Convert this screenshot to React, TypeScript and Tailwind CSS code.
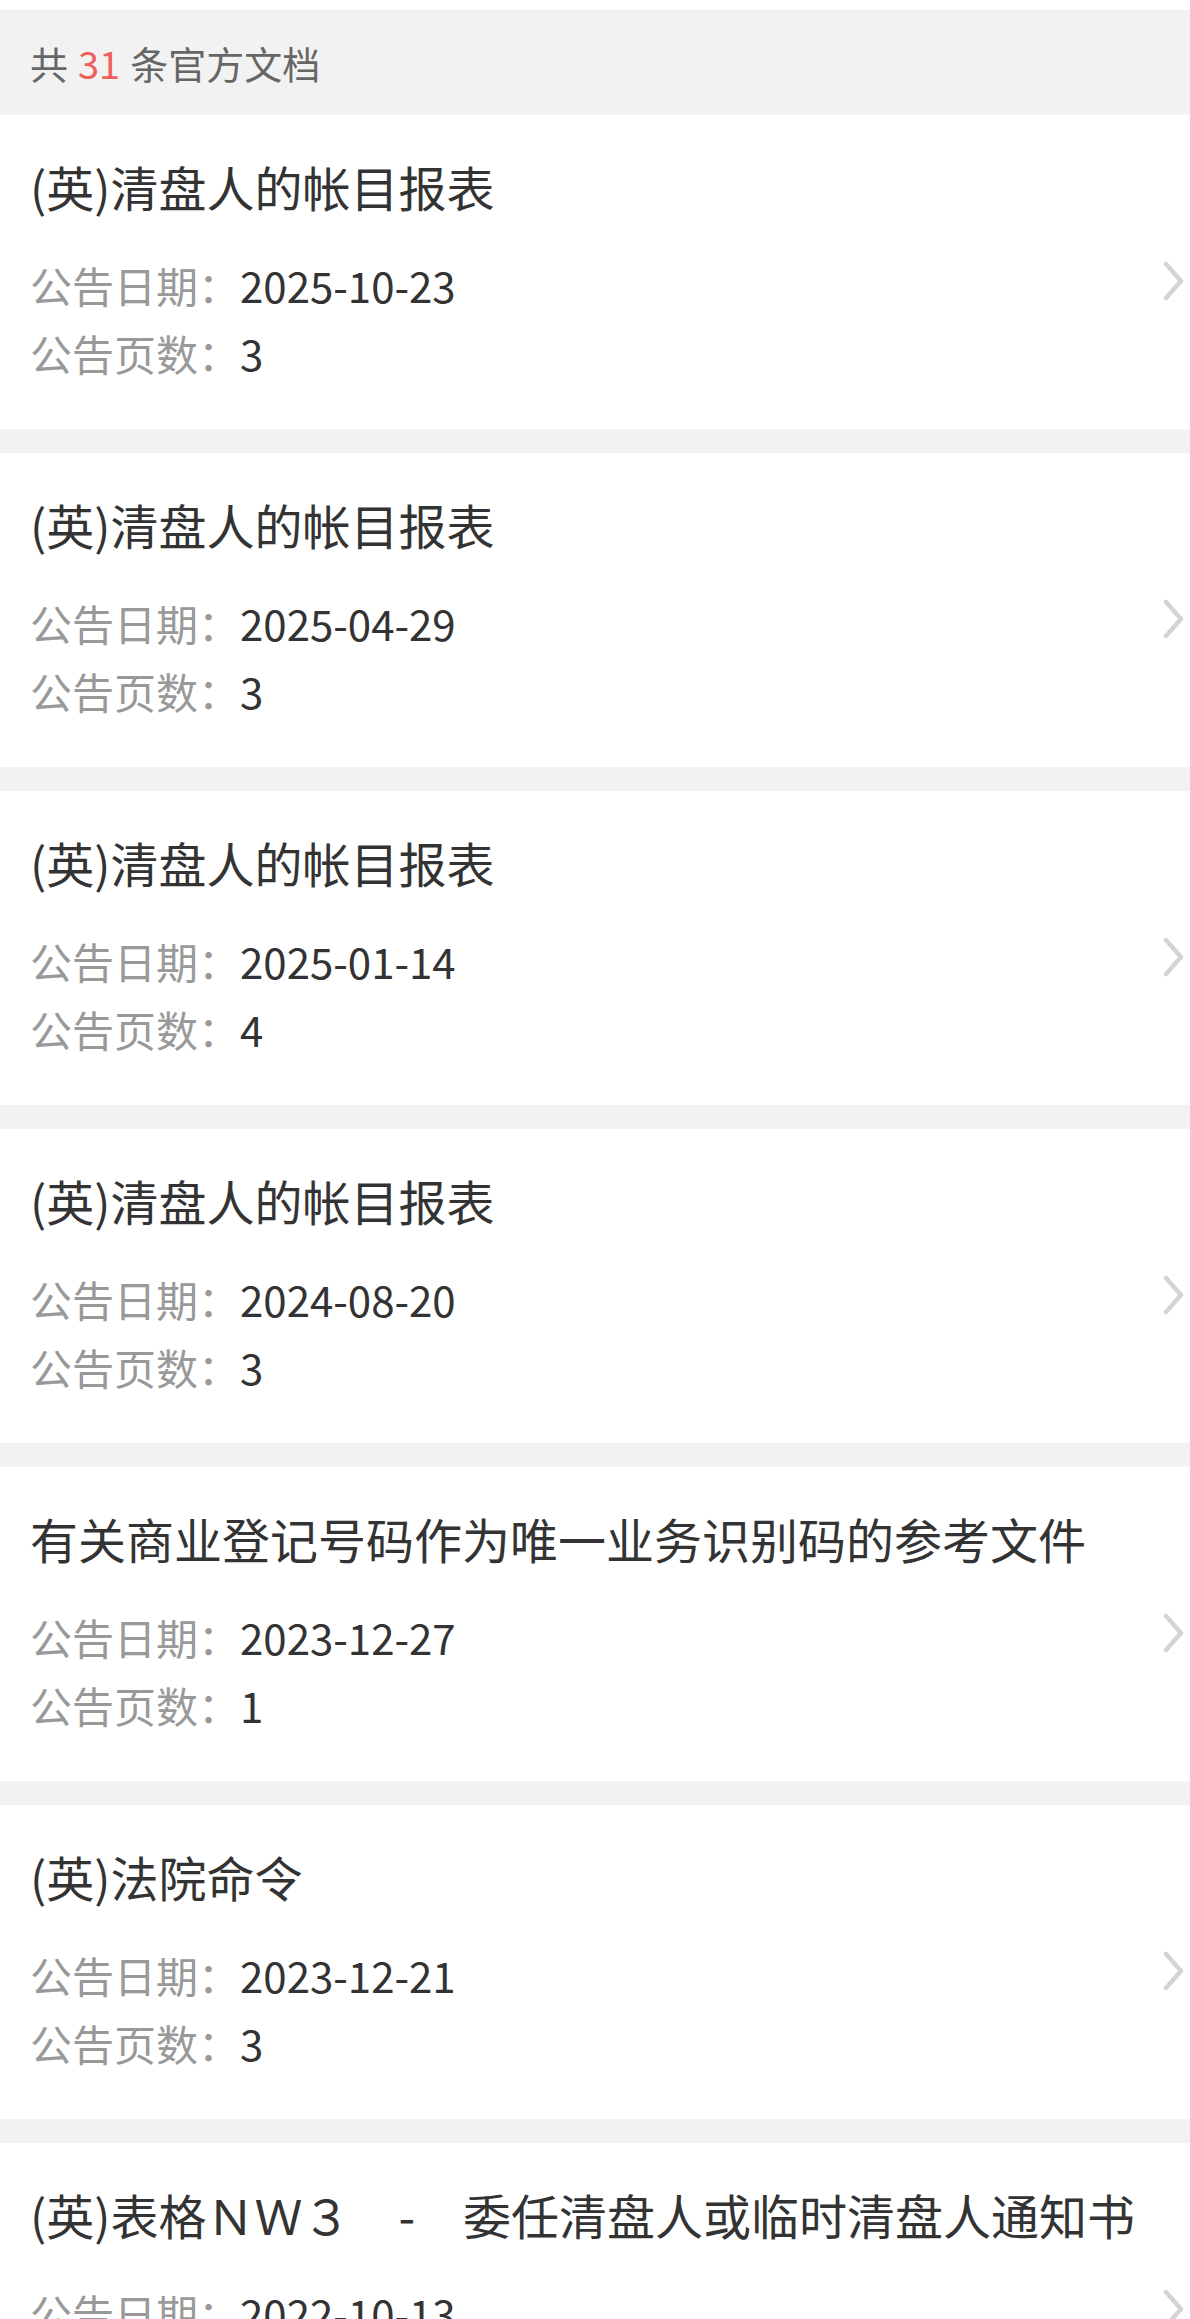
type Doc = { title: string; date: string; pages: number };

const DOCS: Doc[] = [
  { title: "(英)清盘人的帐目报表", date: "2025-10-23", pages: 3 },
  { title: "(英)清盘人的帐目报表", date: "2025-04-29", pages: 3 },
  { title: "(英)清盘人的帐目报表", date: "2025-01-14", pages: 4 },
  { title: "(英)清盘人的帐目报表", date: "2024-08-20", pages: 3 },
  { title: "有关商业登记号码作为唯一业务识别码的参考文件", date: "2023-12-27", pages: 1 },
  { title: "(英)法院命令", date: "2023-12-21", pages: 3 },
  { title: "(英)表格ＮＷ３　-　委任清盘人或临时清盘人通知书", date: "2022-10-13", pages: 2 },
];

function Chevron() {
  return (
    <svg width="24" height="40" viewBox="0 0 24 40" fill="none">
      <polyline
        points="4,3 19,20 4,37"
        stroke="#d4d4d4"
        strokeWidth="4.5"
        strokeLinecap="round"
        strokeLinejoin="round"
      />
    </svg>
  );
}

function DocRow({ doc }: { doc: Doc }) {
  return (
    <div className="flex h-[314px] items-center bg-white">
      <div className="flex-1 self-start pl-[30px] pt-[43px]">
        <div className="whitespace-nowrap text-[48px] leading-[56px] text-[#333333]">{doc.title}</div>
        <div className="mt-[37px] text-[42px] leading-[68px]">
          <div className="flex">
            <span className="text-[#999999]">公告日期：</span>
            <span className="text-[#333333]">{doc.date}</span>
          </div>
          <div className="flex">
            <span className="text-[#999999]">公告页数：</span>
            <span className="text-[#333333]">{doc.pages}</span>
          </div>
        </div>
      </div>
      <div className="mt-[18px] pr-[4px]">
        <Chevron />
      </div>
    </div>
  );
}

export default function App() {
  return (
    <div
      className="min-h-screen bg-[#f2f2f2]"
      style={{ fontFamily: '"Noto Sans CJK SC", "Noto Sans", sans-serif' }}
    >
      <div className="h-[10px] bg-white" />
      <div className="flex h-[105px] items-center pl-[30px] text-[38px] text-[#666666]">
        共 <span className="mx-[10px] text-[#f0605a]">31</span> 条官方文档
      </div>
      <div className="flex flex-col gap-[24px]">
        {DOCS.map((d, i) => (
          <DocRow key={i} doc={d} />
        ))}
      </div>
    </div>
  );
}
